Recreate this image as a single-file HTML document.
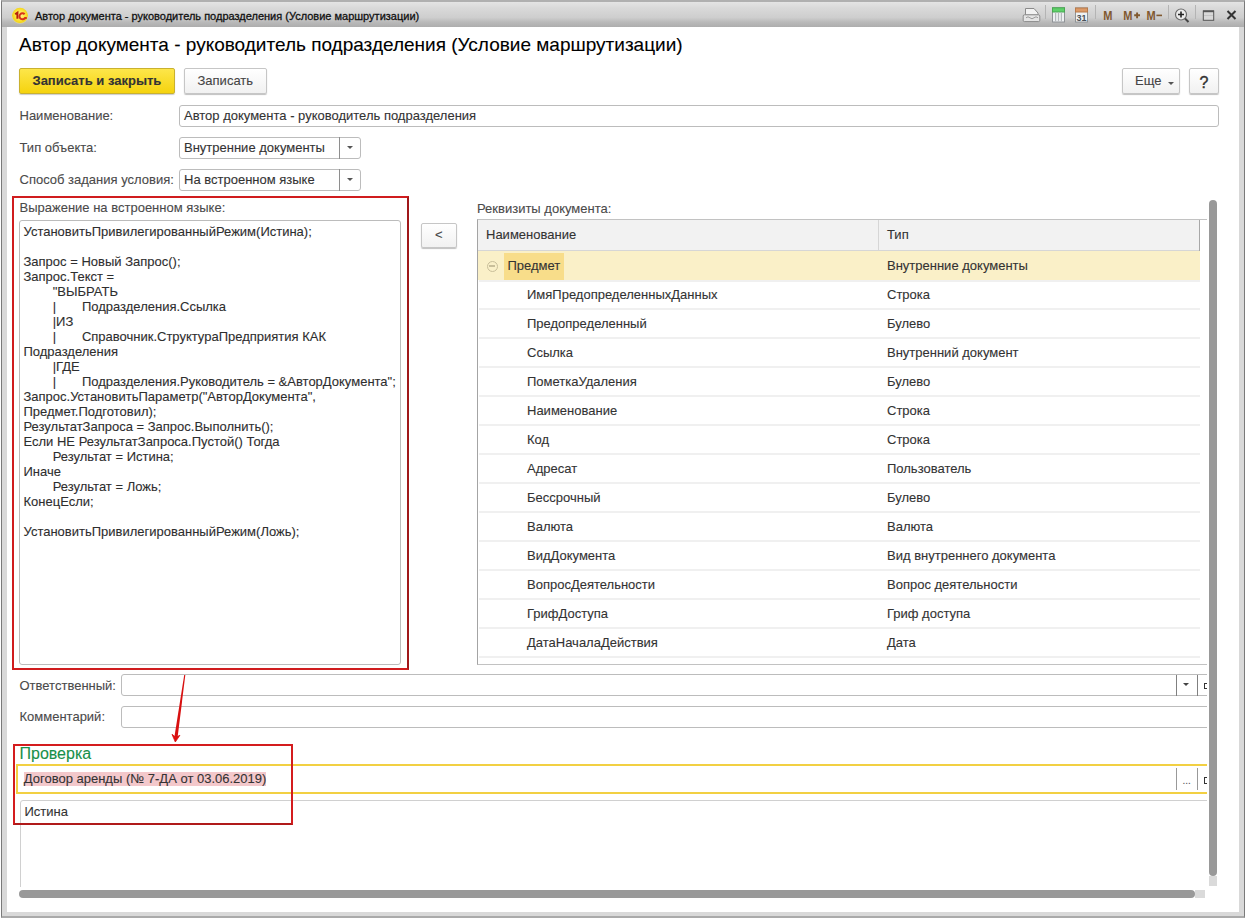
<!DOCTYPE html>
<html><head><meta charset="utf-8">
<style>
*{box-sizing:border-box;margin:0;padding:0}
html,body{width:1245px;height:919px;overflow:hidden;background:#fff;font-family:"Liberation Sans",sans-serif;}
.a{position:absolute}
.t{position:absolute;white-space:pre;font-size:13px;line-height:16px;color:#4a4a4a;-webkit-text-stroke:0.1px currentColor}
.btn{position:absolute;border:1px solid #c6c6c6;border-radius:2px;background:linear-gradient(#fff,#f1f1f1);box-shadow:0 1px 1px rgba(0,0,0,.25)}
.inp{position:absolute;border:1px solid #bcbcbc;border-radius:3px;background:#fff}
.c{color:#2e2e2e}
.r{color:#333}
.hl{position:absolute;background:#bdbdbd}
</style></head><body>
<!-- window frame -->
<div class="a" style="left:1px;top:0;width:1244px;height:918px;background:#d9d9d9;border-left:1px solid #7a7a7a;border-right:1px solid #7a7a7a;border-top:2px solid #b0b0b0;border-bottom:2px solid #aaa"></div>
<!-- title bar -->
<div class="a" style="left:2px;top:2px;width:1242px;height:25px;background:linear-gradient(#e4e4e4 0%,#d9d9d9 25%,#cecece 62%,#bababa 80%,#adadad 100%)"></div>
<!-- content -->
<div class="a" style="left:7px;top:27px;width:1232px;height:885px;background:#fff"></div>


<!-- 1C logo -->
<svg class="a" style="left:10px;top:6px" width="22" height="20">
  <defs><radialGradient id="lg" cx="50%" cy="45%" r="55%"><stop offset="0" stop-color="#fff6a0"/><stop offset="0.55" stop-color="#fde53c"/><stop offset="0.85" stop-color="#f2d41c"/><stop offset="1" stop-color="#e9e0a8" stop-opacity="0.6"/></radialGradient></defs>
  <circle cx="10" cy="9.8" r="8" fill="url(#lg)"/>
  <path d="M5.2 8.2 l2.2 -1.6 v6.2" stroke="#b4200c" stroke-width="2" fill="none"/>
  <path d="M14.6 8.3 a3 3 0 1 0 0.4 3.6 h1.8" stroke="#d8321a" stroke-width="2" fill="none"/>
</svg>
<!-- title icons -->
<svg class="a" style="left:1015px;top:0" width="230" height="27">
  <!-- printer -->
  <g stroke="#8a8a8a" stroke-width="1" fill="#f2f2f2">
    <path d="M10.5 8.5 h8.5 l4 4.5 v2 h-12.5 z"/>
    <path d="M9.5 14.8 h14 q1.3 0 1.3 1.3 v4.2 q0 1.3 -1.3 1.3 h-14 q-1.3 0 -1.3 -1.3 v-4.2 q0 -1.3 1.3 -1.3 z" fill="#e4e4e4"/>
    <path d="M11 17.8 q2 -2 4 0 t4 0 t4 0" fill="none" stroke="#9a9a9a"/>
  </g>
  <line x1="30.5" y1="5" x2="30.5" y2="19" stroke="#b4b4b4"/>
  <!-- calculator -->
  <rect x="37.5" y="7.8" width="12" height="14.2" fill="#eef0f2" stroke="#8e9296"/>
  <rect x="37.5" y="7.8" width="12" height="4.2" fill="#5fd06a" stroke="#48a852"/>
  <g stroke="#b4b8bc" stroke-width="1.2"><line x1="40.6" y1="12.5" x2="40.6" y2="21.5"/><line x1="43.5" y1="12.5" x2="43.5" y2="21.5"/><line x1="46.4" y1="12.5" x2="46.4" y2="21.5"/></g>
  <!-- calendar -->
  <rect x="60.5" y="8" width="12" height="14" fill="#eef2f4" stroke="#8e9296"/>
  <rect x="60.5" y="8" width="12" height="4" fill="#dc9a68" stroke="#b87a4a"/>
  <text x="66.6" y="20.6" font-family="Liberation Sans" font-size="9" font-weight="bold" fill="#4a5058" text-anchor="middle">31</text>
  <line x1="80.5" y1="5" x2="80.5" y2="19" stroke="#b4b4b4"/>
  <!-- M M+ M- -->
  <text x="88.3" y="20" font-family="Liberation Sans" font-size="13" font-weight="bold" fill="#80582f" textLength="9.2" lengthAdjust="spacingAndGlyphs">M</text>
  <text x="108.3" y="20" font-family="Liberation Sans" font-size="13" font-weight="bold" fill="#80582f" textLength="9.2" lengthAdjust="spacingAndGlyphs">M</text>
  <path d="M119.2 15.3 h5.8 M122.1 12.4 v5.8" stroke="#80582f" stroke-width="1.9"/>
  <text x="131.5" y="20" font-family="Liberation Sans" font-size="13" font-weight="bold" fill="#80582f" textLength="9.2" lengthAdjust="spacingAndGlyphs">M</text>
  <path d="M141.4 15.4 h5.6" stroke="#80582f" stroke-width="1.6"/>
  <line x1="153.5" y1="5" x2="153.5" y2="19" stroke="#b4b4b4"/>
  <!-- zoom -->
  <circle cx="166" cy="14.5" r="5.5" fill="#ececec" stroke="#6a6a6a" stroke-width="1.2"/>
  <path d="M163 14.5 h6 M166 11.5 v6" stroke="#222" stroke-width="1.6"/>
  <path d="M170 18.5 l3.5 3.5" stroke="#444" stroke-width="2"/>
  <line x1="180.5" y1="5" x2="180.5" y2="19" stroke="#b4b4b4"/>
  <!-- maximize -->
  <rect x="188.3" y="11" width="10.4" height="9.3" fill="#d8d8d8" stroke="#555" stroke-width="1"/>
  <line x1="188" y1="11.3" x2="199" y2="11.3" stroke="#555" stroke-width="1.8"/>
  <line x1="189" y1="15.5" x2="198" y2="15.5" stroke="#c4c4c4" stroke-width="1"/>
  <!-- close -->
  <path d="M212.5 11 l8 8 M220.5 11 l-8 8" stroke="#333" stroke-width="2"/>
</svg>

<!-- title -->
<div class="t" style="left:35px;top:8.3px;font-size:11px;color:#111;-webkit-text-stroke:0.3px #111">Автор документа - руководитель подразделения (Условие маршрутизации)</div>

<!-- heading -->
<div class="t" style="left:19px;top:33.8px;font-size:19px;line-height:22px;color:#000">Автор документа - руководитель подразделения (Условие маршрутизации)</div>

<!-- buttons -->
<div class="a" style="left:19px;top:68px;width:156px;height:26px;border:1px solid #c9b12f;border-radius:2px;background:linear-gradient(#fde64a,#f5d30e);box-shadow:0 1px 1px rgba(0,0,0,.2)"></div>
<div class="t" style="left:32.5px;top:72.5px;font-weight:bold;color:#333">Записать и закрыть</div>
<div class="btn" style="left:183.5px;top:68px;width:83px;height:26px"></div>
<div class="t" style="left:197.5px;top:72.5px;color:#444">Записать</div>
<div class="btn" style="left:1122px;top:68px;width:58px;height:26px"></div>
<div class="t" style="left:1135px;top:72.5px;color:#444">Еще</div>
<div class="btn" style="left:1189px;top:68px;width:29.5px;height:26px"></div>
<div class="t" style="left:1199.5px;top:75px;font-size:16px;color:#333;-webkit-text-stroke:0.4px #333">?</div>

<!-- form rows -->
<div class="t" style="left:19.5px;top:108px">Наименование:</div>
<div class="inp" style="left:179px;top:104.6px;width:1040px;height:22.6px"></div>
<div class="t" style="left:184px;top:108px;color:#333">Автор документа - руководитель подразделения</div>

<div class="t" style="left:19.5px;top:140px">Тип объекта:</div>
<div class="inp" style="left:179px;top:136.5px;width:182px;height:22.5px"></div>
<div class="t" style="left:184px;top:140px;color:#333">Внутренние документы</div>

<div class="t" style="left:19.5px;top:172px">Способ задания условия:</div>
<div class="inp" style="left:179px;top:168.6px;width:182px;height:22.6px"></div>
<div class="t" style="left:184px;top:172px;color:#333">На встроенном языке</div>


<!-- dropdown parts -->
<div class="hl" style="left:339px;top:137px;width:1px;height:21.5px;background:#8e8e8e"></div>
<div class="a" style="left:347px;top:146px;width:0;height:0;border-left:3px solid transparent;border-right:3px solid transparent;border-top:3px solid #555"></div>
<div class="hl" style="left:339px;top:169px;width:1px;height:21.5px;background:#8e8e8e"></div>
<div class="a" style="left:347px;top:178px;width:0;height:0;border-left:3px solid transparent;border-right:3px solid transparent;border-top:3px solid #555"></div>
<!-- Еще arrow -->
<div class="a" style="left:1167.5px;top:81.5px;width:0;height:0;border-left:3px solid transparent;border-right:3px solid transparent;border-top:3px solid #555"></div>

<!-- red box 1 -->
<div class="a" style="left:12.2px;top:196.1px;width:396.8px;height:474.2px;border:2px solid #d01c1e;border-right-color:#a0181a"></div>
<div class="t" style="left:19.5px;top:200px">Выражение на встроенном языке:</div>
<div class="inp" style="left:19.1px;top:219.5px;width:381.8px;height:445.1px"></div>
<div class="t c" style="left:23.5px;top:224.4px">УстановитьПривилегированныйРежим(Истина);</div>
<div class="t c" style="left:23.5px;top:254.4px">Запрос = Новый Запрос();</div>
<div class="t c" style="left:23.5px;top:269.4px">Запрос.Текст = </div>
<div class="t c" style="left:52.7px;top:284.4px">"ВЫБРАТЬ</div>
<div class="t c" style="left:52.7px;top:299.4px">|</div>
<div class="t c" style="left:81.9px;top:299.4px">Подразделения.Ссылка</div>
<div class="t c" style="left:52.7px;top:314.4px">|ИЗ</div>
<div class="t c" style="left:52.7px;top:329.4px">|</div>
<div class="t c" style="left:81.9px;top:329.4px">Справочник.СтруктураПредприятия КАК</div>
<div class="t c" style="left:23.5px;top:344.4px">Подразделения</div>
<div class="t c" style="left:52.7px;top:359.4px">|ГДЕ</div>
<div class="t c" style="left:52.7px;top:374.4px">|</div>
<div class="t c" style="left:81.9px;top:374.4px">Подразделения.Руководитель = &amp;АвторДокумента";</div>
<div class="t c" style="left:23.5px;top:389.4px">Запрос.УстановитьПараметр("АвторДокумента",</div>
<div class="t c" style="left:23.5px;top:404.4px">Предмет.Подготовил);</div>
<div class="t c" style="left:23.5px;top:419.4px">РезультатЗапроса = Запрос.Выполнить();</div>
<div class="t c" style="left:23.5px;top:434.4px">Если НЕ РезультатЗапроса.Пустой() Тогда</div>
<div class="t c" style="left:52.7px;top:449.4px">Результат = Истина;</div>
<div class="t c" style="left:23.5px;top:464.4px">Иначе</div>
<div class="t c" style="left:52.7px;top:479.4px">Результат = Ложь;</div>
<div class="t c" style="left:23.5px;top:494.4px">КонецЕсли;</div>
<div class="t c" style="left:23.5px;top:524.4px">УстановитьПривилегированныйРежим(Ложь);</div>

<!-- < button -->
<div class="btn" style="left:421px;top:223px;width:36px;height:25px"></div>
<div class="t" style="left:435px;top:227px;color:#444">&lt;</div>

<!-- table -->
<div class="t" style="left:477px;top:200.5px">Реквизиты документа:</div>
<div class="a" style="left:477px;top:219px;width:730px;height:445.5px;border:1px solid #c2c2c2;border-left-color:#a4a4a4;border-right:none;overflow:hidden;background:#fff">
</div>
<div class="a" style="left:478px;top:220px;width:722px;height:31px;background:#f2f2f2;border-bottom:1px solid #d6d6d6"></div>
<div class="a" style="left:878px;top:220px;width:1px;height:31px;background:#d6d6d6"></div>
<div class="a" style="left:1199px;top:220px;width:1px;height:31px;background:#a8a8a8"></div>
<div class="t" style="left:486px;top:226.5px;color:#333">Наименование</div>
<div class="t" style="left:887px;top:226.5px;color:#333">Тип</div>
<div class="a" style="left:478px;top:251px;width:722px;height:29px;background:#faf0c8"></div>
<div class="a" style="left:504px;top:252.5px;width:60px;height:27px;background:#f8dd8a"></div>
<div class="a" style="left:486.5px;top:260.5px;width:11px;height:11px;border-radius:50%;border:1.6px solid #c9bf9a"></div>
<div class="a" style="left:489px;top:265px;width:6px;height:2px;background:#c9bf9a"></div>
<div class="a" style="left:479px;top:280px;width:721px;height:1.5px;background:#f0f0f0"></div>
<div class="t r" style="left:507.5px;top:257.6px">Предмет</div><div class="t r" style="left:887px;top:257.6px">Внутренние документы</div>
<div class="t r" style="left:527px;top:286.5px">ИмяПредопределенныхДанных</div><div class="t r" style="left:887px;top:286.5px">Строка</div>
<div class="a" style="left:479px;top:308px;width:721px;height:2px;background:#f0f0f0"></div>
<div class="t r" style="left:527px;top:315.5px">Предопределенный</div><div class="t r" style="left:887px;top:315.5px">Булево</div>
<div class="a" style="left:479px;top:337px;width:721px;height:2px;background:#f0f0f0"></div>
<div class="t r" style="left:527px;top:344.5px">Ссылка</div><div class="t r" style="left:887px;top:344.5px">Внутренний документ</div>
<div class="a" style="left:479px;top:366px;width:721px;height:2px;background:#f0f0f0"></div>
<div class="t r" style="left:527px;top:373.5px">ПометкаУдаления</div><div class="t r" style="left:887px;top:373.5px">Булево</div>
<div class="a" style="left:479px;top:395px;width:721px;height:2px;background:#f0f0f0"></div>
<div class="t r" style="left:527px;top:402.5px">Наименование</div><div class="t r" style="left:887px;top:402.5px">Строка</div>
<div class="a" style="left:479px;top:424px;width:721px;height:2px;background:#f0f0f0"></div>
<div class="t r" style="left:527px;top:431.5px">Код</div><div class="t r" style="left:887px;top:431.5px">Строка</div>
<div class="a" style="left:479px;top:453px;width:721px;height:2px;background:#f0f0f0"></div>
<div class="t r" style="left:527px;top:460.5px">Адресат</div><div class="t r" style="left:887px;top:460.5px">Пользователь</div>
<div class="a" style="left:479px;top:482px;width:721px;height:2px;background:#f0f0f0"></div>
<div class="t r" style="left:527px;top:489.5px">Бессрочный</div><div class="t r" style="left:887px;top:489.5px">Булево</div>
<div class="a" style="left:479px;top:511px;width:721px;height:2px;background:#f0f0f0"></div>
<div class="t r" style="left:527px;top:518.5px">Валюта</div><div class="t r" style="left:887px;top:518.5px">Валюта</div>
<div class="a" style="left:479px;top:540px;width:721px;height:2px;background:#f0f0f0"></div>
<div class="t r" style="left:527px;top:547.5px">ВидДокумента</div><div class="t r" style="left:887px;top:547.5px">Вид внутреннего документа</div>
<div class="a" style="left:479px;top:569px;width:721px;height:2px;background:#f0f0f0"></div>
<div class="t r" style="left:527px;top:576.5px">ВопросДеятельности</div><div class="t r" style="left:887px;top:576.5px">Вопрос деятельности</div>
<div class="a" style="left:479px;top:598px;width:721px;height:2px;background:#f0f0f0"></div>
<div class="t r" style="left:527px;top:605.5px">ГрифДоступа</div><div class="t r" style="left:887px;top:605.5px">Гриф доступа</div>
<div class="a" style="left:479px;top:627px;width:721px;height:2px;background:#f0f0f0"></div>
<div class="t r" style="left:527px;top:634.5px">ДатаНачалаДействия</div><div class="t r" style="left:887px;top:634.5px">Дата</div>
<div class="a" style="left:479px;top:656px;width:721px;height:2px;background:#f0f0f0"></div>

<!-- scrollbar v -->
<div class="a" style="left:1209px;top:200px;width:8px;height:676px;border-radius:4px;background:#999"></div>
<div class="a" style="left:1209px;top:876px;width:8px;height:10px;background:#dadada"></div>

<!-- Ответственный -->
<div class="t" style="left:19.5px;top:677.5px">Ответственный:</div>
<div class="t" style="left:19.5px;top:709px">Комментарий:</div>
<div class="a" style="left:7px;top:660px;width:1200px;height:227px;overflow:hidden">
  <div class="inp" style="left:114px;top:13.6px;width:1110px;height:22.4px"></div>
  <div class="hl" style="left:1169px;top:15px;width:1px;height:21px;background:#808080"></div>
  <div class="a" style="left:1176px;top:23px;width:0;height:0;border-left:3px solid transparent;border-right:3px solid transparent;border-top:3px solid #444"></div>
  <div class="hl" style="left:1190px;top:15px;width:1px;height:21px;background:#808080"></div>
  <div class="a" style="left:1197px;top:22.5px;width:5px;height:6.5px;border:1.5px solid #333;border-right:none"></div>
  <div class="inp" style="left:114px;top:45.6px;width:1110px;height:22.8px"></div>

  <div class="a" style="left:9px;top:104.2px;width:1210px;height:29.5px;border:2px solid #f2d043"></div>
  <div class="hl" style="left:1169px;top:108px;width:1px;height:22px;background:#999"></div>
  <div class="hl" style="left:1190px;top:108px;width:1px;height:22px;background:#999"></div>
  <div class="t" style="left:1175.5px;top:112.5px;font-size:10px;color:#555">...</div>
  <div class="a" style="left:1197px;top:117px;width:5px;height:6.5px;border:1.5px solid #333;border-right:none"></div>
  <div class="a" style="left:12.5px;top:140px;width:1210px;height:200px;border:1px solid #d0d0d0;border-radius:3px"></div>
</div>

<div class="a" style="left:23.8px;top:771.8px;width:242.4px;height:13.8px;background:#f3c8cb"></div>
<div class="t" style="left:23.8px;top:771.2px;color:#333">Договор аренды (№ 7-ДА от 03.06.2019)</div>
<div class="t" style="left:24.4px;top:803.5px;color:#333">Истина</div>
<div class="t" style="left:19.5px;top:744.2px;font-size:16px;line-height:20px;color:#18904a">Проверка</div>

<!-- red box 2 -->
<div class="a" style="left:12.5px;top:743.5px;width:280.7px;height:81.3px;border:2px solid #d41c1e;border-bottom-color:#b01a1a"></div>

<!-- scrollbar h -->
<div class="a" style="left:19px;top:890px;width:1176px;height:8px;border-radius:4px;background:#999"></div>
<div class="a" style="left:1195px;top:890px;width:10px;height:8px;background:#dadada"></div>

<!-- arrow -->
<svg class="a" style="left:0;top:0" width="1245" height="919">
  <path d="M184.2 675 L185.3 675 L177.6 737.5 L174.4 737 Z" fill="#d81010"/>
  <path d="M172 734.3 L175.8 737.3 L179.9 735.3 L175.3 742 Z" fill="#e00c0c" stroke="#d81010" stroke-width="0.8" stroke-linejoin="round"/>
</svg>

</body></html>
